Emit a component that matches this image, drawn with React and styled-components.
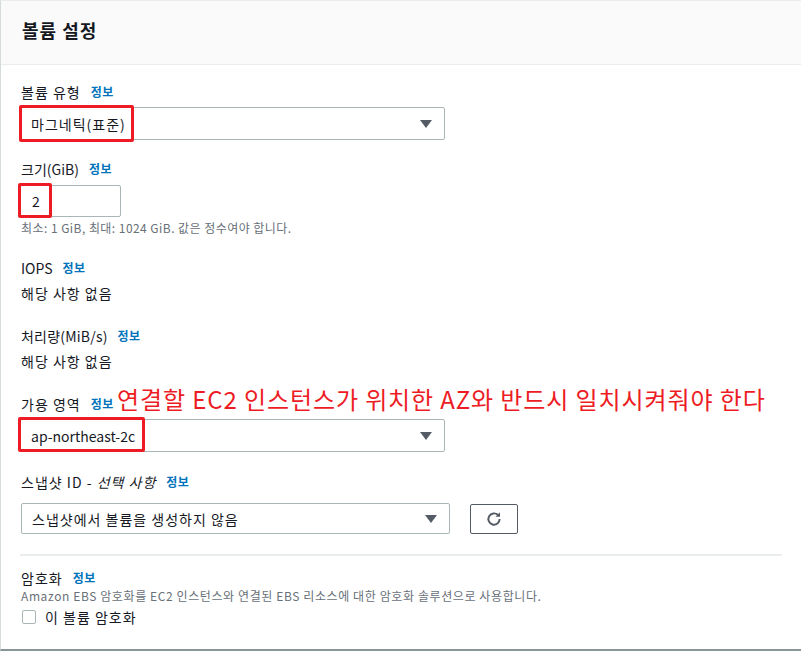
import React from "react";
import styled, { createGlobalStyle } from "styled-components";

const GlobalStyle = createGlobalStyle`
  html, body {
    margin: 0;
    padding: 0;
    background: #fff;
  }
  body {
    font-family: "Noto Sans CJK KR", "Noto Sans", "Liberation Sans", sans-serif;
    color: #16191f;
  }
`;

const Panel = styled.div`
  width: 820px;
  height: 651px;
  border-top: 1px solid #eaeded;
  border-left: 1px solid #d5dbdb;
  border-bottom: 2px solid #879596;
  box-sizing: border-box;
  background: #fff;
`;

const Header = styled.div`
  height: 64px;
  background: #fafafa;
  border-bottom: 1px solid #eaeded;
  display: flex;
  align-items: center;
  padding-left: 21px;
  padding-bottom: 6px;
  box-sizing: border-box;
`;

const HeaderTitle = styled.h2`
  margin: 0;
  font-size: 18px;
  font-weight: 700;
  letter-spacing: 1px;
  color: #16191f;
`;

const Body = styled.div`
  padding: 17px 0 0 19px;
  width: 762px;
`;

const Field = styled.div`
  margin-top: ${(p) => p.$mt || 0}px;
`;

const Label = styled.div`
  display: flex;
  align-items: center;
  gap: 10px;
  font-size: 14px;
  line-height: 20px;
  height: 20px;
  color: #16191f;
  padding-left: 1px;
  position: relative;
`;

const Text = styled.span`
  letter-spacing: ${(p) => p.$ls ?? 1}px;
`;

const Optional = styled.i`
  font-style: italic;
`;

const Info = styled.a`
  font-size: 12px;
  font-weight: 700;
  color: #0073bb;
  text-decoration: none;
  letter-spacing: 0.5px;
`;

const Control = styled.div`
  position: relative;
  margin-top: ${(p) => p.$mt || 5}px;
  display: flex;
  align-items: center;
  gap: 20px;
`;

const Select = styled.div`
  width: ${(p) => p.$w}px;
  height: ${(p) => p.$h || 33}px;
  margin-left: ${(p) => p.$ml || 0}px;
  border: 1px solid #aab7b8;
  border-radius: 2px;
  box-sizing: border-box;
  display: flex;
  align-items: center;
  justify-content: space-between;
  padding: 0 12px 0 10px;
  font-size: 14px;
  color: #16191f;
  background: #fff;
`;

const Caret = styled.span`
  width: 0;
  height: 0;
  border-left: 6px solid transparent;
  border-right: 6px solid transparent;
  border-top: 8px solid #545b64;
`;

const Input = styled.div`
  width: 101px;
  height: 32px;
  border: 1px solid #aab7b8;
  border-radius: 2px;
  box-sizing: border-box;
  display: flex;
  align-items: center;
  padding-left: 11px;
  font-size: 14px;
`;

const Hint = styled.div`
  margin-top: 3px;
  font-size: 12px;
  line-height: 16px;
  letter-spacing: 0.45px;
  color: #687078;
  padding-left: 1px;
`;

const Value = styled.div`
  margin-top: 5px;
  font-size: 14px;
  line-height: 20px;
  letter-spacing: 1px;
  padding-left: 1px;
`;

const IconButton = styled.button`
  width: 48px;
  height: 30px;
  border: 1px solid #545b64;
  border-radius: 2px;
  background: #fff;
  display: flex;
  align-items: center;
  justify-content: center;
  padding: 0;
`;

const Divider = styled.hr`
  margin: 20px 0 0 0;
  border: none;
  border-top: 2px solid #eaeded;
  width: 762px;
`;

const Description = styled.div`
  font-size: 12px;
  line-height: 16px;
  color: #687078;
  padding-left: 1px;
  letter-spacing: 0.6px;
`;

const CheckRow = styled.label`
  margin-top: 3px;
  display: flex;
  align-items: center;
  gap: 9px;
  font-size: 14px;
  line-height: 20px;
  letter-spacing: 1px;
  padding-left: 2px;
`;

const CheckBox = styled.span`
  width: 14px;
  height: 14px;
  border: 1px solid #aab7b8;
  border-radius: 2px;
  box-sizing: border-box;
  display: inline-block;
`;

const Highlight = styled.div`
  position: absolute;
  left: ${(p) => p.$l}px;
  top: ${(p) => p.$t}px;
  width: ${(p) => p.$w}px;
  height: ${(p) => p.$h}px;
  border: 3px solid #ed1c24;
  border-radius: 2px;
  box-sizing: border-box;
  pointer-events: none;
`;

const Annotation = styled.span`
  position: absolute;
  left: 97px;
  top: -9px;
  font-size: 24px;
  line-height: 28px;
  letter-spacing: 0.9px;
  color: #ed1c24;
  white-space: nowrap;
`;

const RefreshIcon = () => (
  <svg width="18" height="18" viewBox="0 0 24 24" fill="none" stroke="#545b64" strokeWidth="2.6">
    <path d="M19.5 12a7.5 7.5 0 1 1-2.2-5.3" />
    <path d="M20 3v6h-6z" fill="#545b64" stroke="none" />
  </svg>
);

export default function App() {
  return (
    <>
      <GlobalStyle />
      <Panel>
        <Header>
          <HeaderTitle>볼륨 설정</HeaderTitle>
        </Header>
        <Body>
          <Field>
            <Label>
              <Text>볼륨 유형</Text>
              <Info>정보</Info>
            </Label>
            <Control>
              <Select $w={425}>
                <Text>마그네틱(표준)</Text>
                <Caret />
              </Select>
              <Highlight $l={-1} $t={-2} $w={115} $h={37} />
            </Control>
          </Field>

          <Field $mt={19}>
            <Label>
              <Text $ls={0}>크기(GiB)</Text>
              <Info>정보</Info>
            </Label>
            <Control $mt={6}>
              <Input>2</Input>
              <Highlight $l={-2} $t={-2} $w={34} $h={35} />
            </Control>
            <Hint>최소: 1 GiB, 최대: 1024 GiB. 값은 정수여야 합니다.</Hint>
          </Field>

          <Field $mt={22}>
            <Label>
              <Text $ls={0}>IOPS</Text>
              <Info>정보</Info>
            </Label>
            <Value>해당 사항 없음</Value>
          </Field>

          <Field $mt={23}>
            <Label>
              <Text $ls={0.2}>처리량(MiB/s)</Text>
              <Info>정보</Info>
            </Label>
            <Value>해당 사항 없음</Value>
          </Field>

          <Field $mt={23}>
            <Label>
              <Text>가용 영역</Text>
              <Info>정보</Info>
              <Annotation>연결할 EC2 인스턴스가 위치한 AZ와 반드시 일치시켜줘야 한다</Annotation>
            </Label>
            <Control>
              <Select $w={425}>
                <Text $ls={0}>ap-northeast-2c</Text>
                <Caret />
              </Select>
              <Highlight $l={-2} $t={-2} $w={127} $h={35} />
            </Control>
          </Field>

          <Field $mt={20}>
            <Label>
              <Text>
                스냅샷 ID - <Optional>선택 사항</Optional>
              </Text>
              <Info>정보</Info>
            </Label>
            <Control $mt={11}>
              <Select $w={429} $h={31} $ml={1}>
                <Text>스냅샷에서 볼륨을 생성하지 않음</Text>
                <Caret />
              </Select>
              <IconButton aria-label="새로 고침">
                <RefreshIcon />
              </IconButton>
            </Control>
          </Field>

          <Divider />

          <Field $mt={12}>
            <Label>
              <Text>암호화</Text>
              <Info>정보</Info>
            </Label>
            <Description>
              Amazon EBS 암호화를 EC2 인스턴스와 연결된 EBS 리소스에 대한 암호화 솔루션으로 사용합니다.
            </Description>
            <CheckRow>
              <CheckBox />이 볼륨 암호화
            </CheckRow>
          </Field>
        </Body>
      </Panel>
    </>
  );
}
